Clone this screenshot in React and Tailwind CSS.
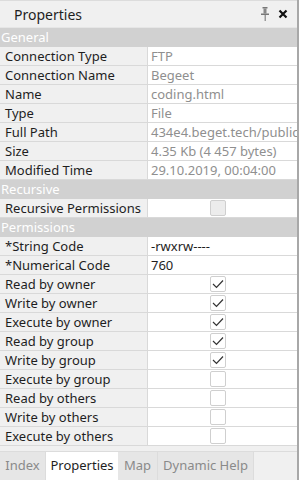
import React from 'react';

const font = { fontFamily: '"Noto Sans", "Open Sans", sans-serif' };

const rows = [
  { group: 'General' },
  { label: 'Connection Type', value: 'FTP', dim: true },
  { label: 'Connection Name', value: 'Begeet', dim: true },
  { label: 'Name', value: 'coding.html', dim: true },
  { label: 'Type', value: 'File', dim: true },
  { label: 'Full Path', value: '434e4.beget.tech/public_html/coding.html', dim: true },
  { label: 'Size', value: '4.35 Kb (4 457 bytes)', dim: true },
  { label: 'Modified Time', value: '29.10.2019, 00:04:00', dim: true },
  { group: 'Recursive' },
  { label: 'Recursive Permissions', check: 'disabled' },
  { group: 'Permissions' },
  { label: '*String Code', value: '-rwxrw----' },
  { label: '*Numerical Code', value: '760' },
  { label: 'Read by owner', check: true },
  { label: 'Write by owner', check: true },
  { label: 'Execute by owner', check: true },
  { label: 'Read by group', check: true },
  { label: 'Write by group', check: true },
  { label: 'Execute by group', check: false },
  { label: 'Read by others', check: false },
  { label: 'Write by others', check: false },
  { label: 'Execute by others', check: false },
];

function Checkbox({ state }) {
  const disabled = state === 'disabled';
  return (
    <div
      className={`w-[16px] h-[16px] rounded-[2px] border border-[#cfcfcf] flex items-center justify-center ${
        disabled ? 'bg-[#ececec]' : 'bg-white'
      }`}
    >
      {state === true && (
        <svg width="12" height="10" viewBox="0 0 12 10">
          <path d="M1 5 L4.5 8.5 L11 1.5" fill="none" stroke="#333" strokeWidth="1.2" />
        </svg>
      )}
    </div>
  );
}

function Row({ row }) {
  if (row.group) {
    return (
      <div className="h-[19px] bg-[#d1d1d1] text-white text-[13px] leading-[18px] pl-[1px] border-b border-[#d1d1d1]">
        {row.group}
      </div>
    );
  }
  return (
    <div className="h-[19px] flex border-b border-[#d9d9d9]">
      <div className="w-[148px] shrink-0 bg-[#f0f0f0] border-r border-[#d9d9d9] text-[13px] leading-[18px] pl-[5px] text-[#1e1e1e] whitespace-nowrap overflow-hidden">
        {row.label}
      </div>
      <div className="flex-1 bg-white overflow-hidden">
        {row.check !== undefined ? (
          <div className="h-full flex items-center pl-[62px]">
            <Checkbox state={row.check} />
          </div>
        ) : (
          <div
            className={`text-[13px] leading-[18px] pl-[3px] whitespace-nowrap ${
              row.dim ? 'text-[#8f8f8f]' : 'text-[#1e1e1e]'
            }`}
          >
            {row.value}
          </div>
        )}
      </div>
    </div>
  );
}

export default function App() {
  return (
    <div className="w-[299px] h-[480px] bg-[#f0f0f0] flex flex-col border-r-2 border-[#a8a8a8] overflow-hidden" style={font}>
      <div className="h-[28px] shrink-0 flex items-center border-t border-[#dcdcdc] border-b border-b-[#e6e6e6]">
        <span className="pl-[14px] text-[14px] text-[#1e1e1e]">Properties</span>
        <div className="ml-auto flex items-center gap-[9px] pr-[9px]">
          <svg width="8" height="14" viewBox="0 0 8 14">
            <rect x="1.5" y="0" width="5" height="1.5" fill="#777" />
            <rect x="2.5" y="1.5" width="3" height="5" fill="#888" />
            <rect x="0" y="6.5" width="8" height="1.5" fill="#777" />
            <rect x="3.5" y="8" width="1.5" height="6" fill="#999" />
          </svg>
          <svg width="10" height="10" viewBox="0 0 10 10">
            <path d="M1.5 1.5 L8.5 8.5 M8.5 1.5 L1.5 8.5" stroke="#111" strokeWidth="2.2" />
          </svg>
        </div>
      </div>
      <div className="flex flex-col">
        {rows.map((r, i) => (
          <Row key={i} row={r} />
        ))}
      </div>
      <div className="mt-[5px] h-[30px] flex items-stretch border-t border-[#dcdcdc] text-[13px]">
        <div className="w-[46px] bg-[#e6e6e6] text-[#8a8a8a] flex items-center justify-center border-r border-[#dcdcdc]">Index</div>
        <div className="w-[72px] bg-white text-[#1e1e1e] flex items-center justify-center">Properties</div>
        <div className="w-[40px] bg-[#e6e6e6] text-[#8a8a8a] flex items-center justify-center border-r border-[#dcdcdc]">Map</div>
        <div className="w-[96px] bg-[#e6e6e6] text-[#8a8a8a] flex items-center justify-center border-r border-[#dcdcdc]">Dynamic Help</div>
        <div className="flex-1 bg-[#f0f0f0]" />
      </div>
    </div>
  );
}
